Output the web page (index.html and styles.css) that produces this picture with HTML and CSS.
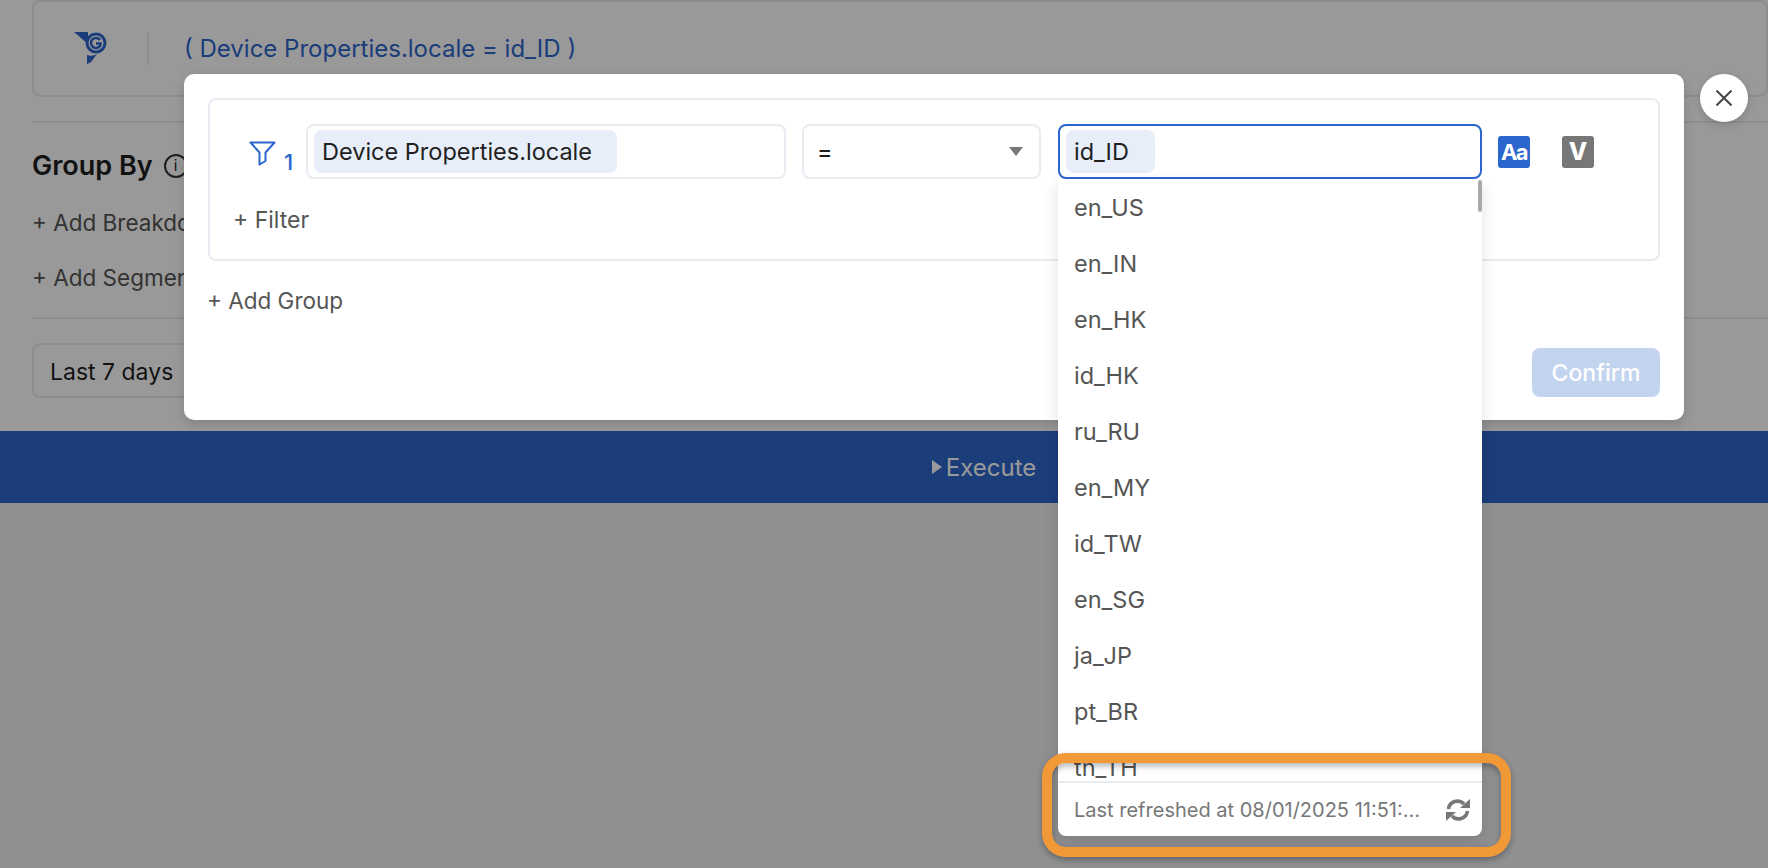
FILE: index.html
```html
<!DOCTYPE html>
<html lang="en">
<head>
    <meta charset="UTF-8">
    <meta name="viewport" content="width=device-width, initial-scale=1.0">
    <title>Filter</title>
    <link rel="stylesheet" href="styles.css">
</head>
<body>
    <div class="page">
        <div class="query-panel">
            <div class="query-card">
                <svg class="brand" width="33" height="33" viewBox="0 0 33 33">
                    <path d="M0 0H14V12Z" fill="#2d66cc"/>
                    <path d="M13 23C16 24 20 24 23 22L17 30L13 32Z" fill="#2d66cc"/>
                    <circle cx="22" cy="11" r="9" fill="none" stroke="#2d66cc" stroke-width="3"/>
                    <path d="M26 8A5 5 0 1 0 26.5 13V11.5H22" fill="none" stroke="#2d66cc" stroke-width="2.6"/>
                </svg>
                <span class="query-sep"></span>
                <span class="query-text">( Device Properties.locale = id_ID )</span>
            </div>
            <div class="section group-section">
                <div class="group-title">Group By <span class="info-icon">i</span></div>
                <div class="add-link">+ Add Breakdown</div>
                <div class="add-link">+ Add Segment</div>
            </div>
            <div class="date-row">
                <div class="date-box">Last 7 days</div>
            </div>
        </div>
        <div class="execute-bar"><span class="play"></span>Execute</div>
    </div>

    <div class="overlay"></div>

    <div class="modal">
        <div class="filter-group">
            <div class="filter-row">
                <div class="filter-label">
                    <svg class="filter-icon" width="27" height="25" viewBox="0 0 27 25">
                        <path d="M1.5 1.5H25.5L16.5 11.5V20L10.5 23.5V11.5Z" fill="none" stroke="#2a66cc" stroke-width="2" stroke-linejoin="round"/>
                    </svg>
                    <span class="filter-num">1</span>
                </div>
                <div class="field prop-field"><span class="chip prop-chip">Device Properties.locale</span></div>
                <div class="field op-field"><span>=</span><span class="caret"></span></div>
                <div class="field value-field"><span class="chip value-chip">id_ID</span></div>
                <span class="type-icon type-text">Aa</span>
                <span class="type-icon type-var">V</span>
            </div>
            <div class="add-filter">+ Filter</div>
        </div>
        <div class="add-group">+ Add Group</div>
        <div class="modal-footer"><button class="confirm">Confirm</button></div>

        <div class="dropdown">
            <div class="scroll-thumb"></div>
            <ul class="options">
                <li>en_US</li>
                <li>en_IN</li>
                <li>en_HK</li>
                <li>id_HK</li>
                <li>ru_RU</li>
                <li>en_MY</li>
                <li>id_TW</li>
                <li>en_SG</li>
                <li>ja_JP</li>
                <li>pt_BR</li>
                <li>th_TH</li>
            </ul>
            <div class="dropdown-footer">
                <span class="refreshed">Last refreshed at 08/01/2025 11:51:...</span>
                <svg width="24" height="22" viewBox="0 0 24 22">
                    <path d="M2.5 10A9 9 0 0 1 18 5" fill="none" stroke="#777" stroke-width="3.6"/>
                    <path d="M14 9H24V0Z" fill="#777"/>
                    <path d="M21.5 12A9 9 0 0 1 6 17" fill="none" stroke="#777" stroke-width="3.6"/>
                    <path d="M10 13H0V22Z" fill="#777"/>
                </svg>
            </div>
        </div>
    </div>

    <button class="close-btn">
        <svg width="16" height="16" viewBox="0 0 16 16">
            <path d="M0.5 0.5L15.5 15.5M15.5 0.5L0.5 15.5" stroke="#444" stroke-width="2"/>
        </svg>
    </button>

    <div class="highlight"></div>
</body>
</html>
```

FILE: styles.css
```css
* {
    box-sizing: border-box;
}
body {
    margin: 0;
    height: 868px;
    overflow: hidden;
    font-family: Inter, "Liberation Sans", sans-serif;
    background-color: #eef0f3;
    color: #1f1f1f;
}
.query-panel {
    background-color: #fff;
    padding: 0 0 32px 32px;
    height: 431px;
}
.query-card {
    display: flex;
    align-items: center;
    height: 97px;
    padding-left: 40px;
    border: 2px solid #e8ecf2;
    border-radius: 8px;
}
.query-sep {
    width: 2px;
    height: 32px;
    margin: 0 35px 0 40px;
    background-color: #e8ecf2;
}
.query-text {
    font-size: 24px;
    color: #2d66cc;
}
.section {
    border-top: 2px solid #e8ecf2;
    border-bottom: 2px solid #e8ecf2;
    margin-top: 24px;
    height: 198px;
    padding-top: 26px;
}
.group-title {
    display: flex;
    align-items: center;
    gap: 11px;
    font-size: 27px;
    font-weight: 600;
    margin-bottom: 27px;
}
.info-icon {
    width: 24px;
    height: 24px;
    border: 2px solid #333;
    border-radius: 50%;
    font-size: 15px;
    font-weight: 400;
    text-align: center;
}
.add-link {
    font-size: 22.5px;
    color: #555;
    margin-bottom: 28px;
}
.date-row {
    padding-top: 24px;
}
.date-box {
    width: 260px;
    height: 55px;
    padding: 13px 16px;
    border: 2px solid #e8ecf2;
    border-radius: 8px;
    font-size: 23px;
}
.execute-bar {
    display: flex;
    justify-content: center;
    align-items: center;
    gap: 4px;
    height: 72px;
    padding-left: 200px;
    background-color: #2d66cc;
    color: #fff;
    font-size: 24px;
}
.play {
    width: 0;
    height: 0;
    border-left: 10px solid #fff;
    border-top: 7px solid transparent;
    border-bottom: 7px solid transparent;
}

/* dimmed layer and everything on top of it */
.overlay {
    position: absolute;
    inset: 0;
    background-color: rgba(0, 0, 0, 0.4);
}
.modal {
    position: absolute;
    left: 184px;
    top: 74px;
    width: 1500px;
    height: 346px;
    padding: 24px 24px 0 24px;
    background-color: #fff;
    border-radius: 10px;
    box-shadow: 0 4px 12px rgba(0, 0, 0, 0.15);
}
.filter-group {
    height: 163px;
    padding: 24px 0 0 0;
    border: 2px solid #e8ecf2;
    border-radius: 8px;
}
.filter-row {
    display: flex;
    align-items: center;
    height: 55px;
}
.filter-label {
    display: flex;
    align-items: flex-start;
    gap: 8px;
    width: 96px;
    height: 36px;
    padding-left: 39px;
    color: #2a66cc;
    font-size: 22px;
    font-weight: 500;
}
.filter-icon {
    margin-top: 7px;
}
.filter-num {
    margin-top: 17px;
    line-height: 22px;
}
.field {
    display: flex;
    align-items: center;
    height: 55px;
    border: 2px solid #e8ecf2;
    border-radius: 8px;
    font-size: 23.5px;
}
.prop-field {
    width: 480px;
    padding: 0 6px;
    margin-right: 16px;
}
.op-field {
    justify-content: space-between;
    width: 239px;
    padding: 0 16px 0 13px;
    margin-right: 17px;
}
.caret {
    width: 0;
    height: 0;
    border-top: 9px solid #777;
    border-left: 7px solid transparent;
    border-right: 7px solid transparent;
}
.value-field {
    width: 424px;
    padding: 0 6px;
    border-color: #2a66cc;
    margin-right: 16px;
}
.chip {
    display: flex;
    align-items: center;
    height: 43px;
    padding: 0 8px;
    background-color: #e7eef9;
    border-radius: 8px;
}
.prop-chip {
    width: 303px;
}
.value-chip {
    width: 89px;
}
.type-icon {
    display: flex;
    justify-content: center;
    align-items: center;
    width: 32px;
    height: 32px;
    border-radius: 3px;
    color: #fff;
    font-weight: 700;
}
.type-text {
    background-color: #2a66cc;
    font-size: 22px;
    margin-right: 32px;
    letter-spacing: -1.5px;
}
.type-var {
    background-color: #777;
    font-size: 24px;
    font-weight: 800;
}
.add-filter {
    margin: 27px 0 0 23px;
    font-size: 23px;
    color: #555;
}
.add-group {
    margin: 26px 0 0 -1px;
    font-size: 22.5px;
    color: #555;
}
.modal-footer {
    display: flex;
    justify-content: flex-end;
    margin-top: 34px;
}
.confirm {
    width: 128px;
    height: 49px;
    border: none;
    border-radius: 8px;
    background-color: #c3d4ef;
    color: #fff;
    font-family: inherit;
    font-size: 23px;
    font-weight: 500;
}
.dropdown {
    position: absolute;
    left: 874px;
    top: 105px;
    width: 424px;
    height: 657px;
    background-color: #fff;
    border-radius: 0 0 8px 8px;
    box-shadow: 0 6px 16px rgba(0, 0, 0, 0.12);
    overflow: hidden;
}
.scroll-thumb {
    position: absolute;
    right: 0;
    top: 1px;
    width: 4px;
    height: 32px;
    border-radius: 2px;
    background-color: #aaa;
}
.options {
    list-style: none;
    margin: 0;
    padding: 0;
    height: 602px;
    overflow: hidden;
}
.options li {
    display: flex;
    align-items: center;
    height: 56px;
    padding-left: 16px;
    font-size: 23.5px;
    color: #555;
}
.dropdown-footer {
    display: flex;
    justify-content: space-between;
    align-items: center;
    height: 55px;
    padding: 0 12px 0 16px;
    border-top: 2px solid #e8ecf2;
}
.refreshed {
    font-size: 20px;
    color: #777;
}
.close-btn {
    position: absolute;
    left: 1700px;
    top: 74px;
    display: flex;
    justify-content: center;
    align-items: center;
    width: 48px;
    height: 48px;
    padding: 0;
    border: none;
    border-radius: 50%;
    background-color: #fff;
    box-shadow: 0 3px 8px rgba(0, 0, 0, 0.15);
}
.highlight {
    position: absolute;
    left: 1042px;
    top: 753px;
    width: 469px;
    height: 104px;
    border: 10px solid #f19837;
    border-radius: 24px;
    box-shadow: 0 3px 6px rgba(0, 0, 0, 0.3), inset 0 3px 6px rgba(0, 0, 0, 0.3);
}
```
